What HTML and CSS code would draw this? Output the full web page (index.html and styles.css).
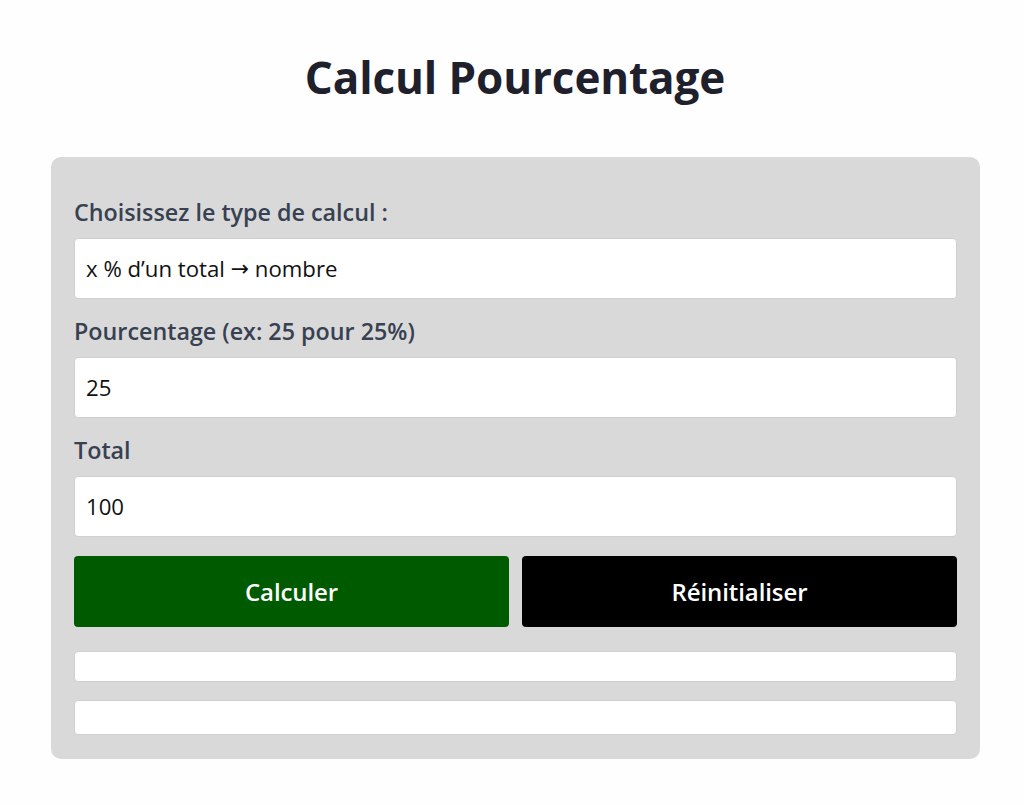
FILE: index.html
```html
<!DOCTYPE html>
<html lang="fr">
<head>
<meta charset="utf-8">
<title>Calcul Pourcentage</title>
<link rel="stylesheet" href="styles.css">
</head>
<body>
<h1 class="title">Calcul Pourcentage</h1>
<div class="card">
  <label class="label label-first">Choisissez le type de calcul :</label>
  <div class="field">x % d’un total <span class="arrow">→</span> nombre</div>
  <label class="label">Pourcentage (ex: 25 pour 25%)</label>
  <div class="field">25</div>
  <label class="label">Total</label>
  <div class="field">100</div>
  <div class="actions">
    <button class="btn btn-calc">Calculer</button>
    <button class="btn btn-reset">Réinitialiser</button>
  </div>
  <div class="result result-one"></div>
  <div class="result result-two"></div>
</div>
</body>
</html>
```
FILE: styles.css
```css
* { box-sizing: border-box; }
body {
  margin: 0;
  background: #fefefe;
  font-family: "Open Sans", "Noto Sans", sans-serif;
  color: #1f2230;
}
.title {
  margin: 47px 0 0;
  height: 60px;
  line-height: 60px;
  text-align: center;
  font-size: 44px;
  font-weight: 700;
  color: #1e202b;
  letter-spacing: -0.1px;
  padding-left: 6px;
}
.card {
  margin: 50px 44px 0 51px;
  background: #d9d9d9;
  border-radius: 10px;
  padding: 43px 23px 24px;
  display: flex;
  flex-direction: column;
}
.label {
  display: block;
  height: 24px;
  line-height: 24px;
  font-size: 23.3px;
  font-weight: 600;
  color: #374151;
  margin: 20px 0 14px;
}
.label-first { margin-top: 0; margin-bottom: 14px; }
.field {
  height: 61px;
  background: #fff;
  border: 1px solid #cfcfcf;
  border-radius: 4px;
  padding: 0 11px;
  display: flex;
  align-items: center;
  font-size: 22.2px;
  color: #111;
  white-space: pre;
}
.arrow {
  font-family: "DejaVu Sans", sans-serif;
  font-size: 22px;
}
.actions {
  display: flex;
  gap: 13px;
  margin-top: 19px;
}
.btn {
  flex: 1;
  height: 71px;
  border: none;
  border-radius: 4px;
  color: #fff;
  font-family: inherit;
  font-size: 24px;
  font-weight: 600;
  letter-spacing: -0.1px;
}
.btn-calc { background: #005a00; }
.btn-reset { background: #000; }
.result {
  background: #fff;
  border: 1px solid #cfcfcf;
  border-radius: 4px;
}
.result-one { height: 31px; margin-top: 24px; }
.result-two { height: 35px; margin-top: 18px; }
```
